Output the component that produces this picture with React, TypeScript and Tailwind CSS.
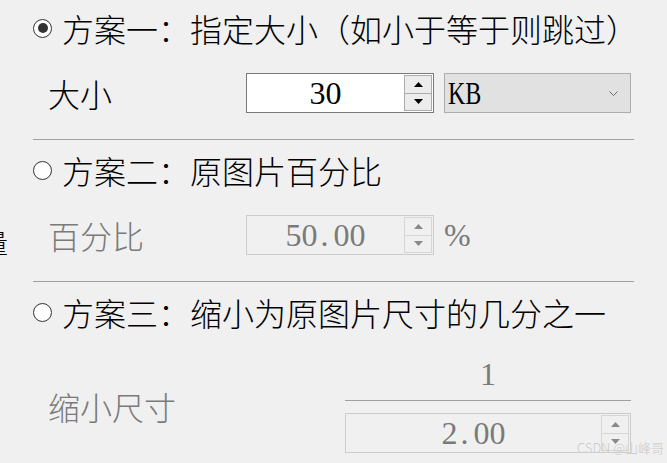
import React from 'react';

const cjk = "font-['Noto_Sans_CJK_SC',sans-serif] font-light";
const serif = "font-['Liberation_Serif','Noto_Sans_CJK_SC',serif] font-normal";

function Radio({ checked }: { checked?: boolean }) {
  return (
    <span className="flex h-[19px] w-[19px] shrink-0 items-center justify-center rounded-full border border-[#333333] bg-white">
      {checked && <span className="h-[10px] w-[10px] rounded-full bg-[#333333]" />}
    </span>
  );
}

function Arrow({ up, disabled }: { up?: boolean; disabled?: boolean }) {
  return (
    <svg width="9" height="5" viewBox="0 0 9 5" className={disabled ? 'fill-[#8a8a8a]' : 'fill-black'}>
      {up ? <polygon points="0,5 4.5,0 9,5" /> : <polygon points="0,0 9,0 4.5,5" />}
    </svg>
  );
}

function Spinner({ disabled }: { disabled?: boolean }) {
  const btn = disabled
    ? 'flex flex-1 items-center justify-center border border-[#d6d6d6] bg-[#f0f0f0]'
    : 'flex flex-1 items-center justify-center border border-[#acacac] bg-[#ececec]';
  return (
    <div className="my-[1px] mr-[1px] flex w-[28px] flex-col">
      <div className={btn}>
        <Arrow up disabled={disabled} />
      </div>
      <div className={`${btn} border-t-0`}>
        <Arrow disabled={disabled} />
      </div>
    </div>
  );
}

// SimSun-style decimal: the period takes a half-width cell
function Num({ value }: { value: string }) {
  const [a, b] = value.split('.');
  if (b === undefined) return <>{a}</>;
  return (
    <>
      {a}
      <span className="inline-block w-[16px] pl-[3px] text-left">.</span>
      {b}
    </>
  );
}

function NumberBox({ value, disabled, width }: { value: string; disabled?: boolean; width: string }) {
  return (
    <div
      className={`flex h-[40px] ${width} border ${
        disabled ? 'border-[#cccccc] bg-[#f0f0f0] text-[#7a7a7a]' : 'border-[#7a7a7a] bg-white text-black'
      }`}
    >
      <div className={`flex flex-1 items-center justify-center text-[32px] leading-none ${serif}`}>
        <Num value={value} />
      </div>
      <Spinner disabled={disabled} />
    </div>
  );
}

function Separator() {
  return <div className="mx-[33px] h-px bg-[#a0a0a0]" />;
}

export default function App() {
  return (
    <div className={`relative h-[463px] w-[667px] overflow-hidden bg-[#f0f0f0] ${cjk}`}>
      {/* 方案一 */}
      <div className="flex h-[56px] items-center gap-[10px] pl-[33px] text-[32px] leading-none text-black">
        <Radio checked />
        <span>方案一：指定大小（如小于等于则跳过）</span>
      </div>

      <div className="mt-[17px] flex items-center pl-[48px]">
        <span className="w-[198px] text-[32px] leading-none text-black">大小</span>
        <NumberBox value="30" width="w-[188px]" />
        <div className="ml-[10px] flex h-[40px] w-[187px] items-center justify-between border border-[#adadad] bg-[#e1e1e1] pl-[3px] pr-[12px]">
          <span className={`inline-block origin-left scale-x-75 text-[32px] leading-none text-black ${serif}`}>KB</span>
          <svg width="9" height="5" viewBox="0 0 9 5" fill="none" stroke="#6b6b6b" strokeWidth="1">
            <polyline points="0.5,0.5 4.5,4.5 8.5,0.5" />
          </svg>
        </div>
      </div>

      <div className="mt-[26px]">
        <Separator />
      </div>

      {/* 方案二 */}
      <div className="flex h-[60px] items-center gap-[10px] pl-[33px] text-[32px] leading-none text-black">
        <Radio />
        <span>方案二：原图片百分比</span>
      </div>

      <div className="mt-[15px] flex items-center">
        <div className="w-[10px] self-end overflow-hidden text-[26px] leading-none text-black">
          <span className="-ml-[18px] block">量</span>
        </div>
        <span className="ml-[38px] w-[198px] text-[32px] leading-none text-[#7a7a7a]">百分比</span>
        <NumberBox value="50.00" disabled width="w-[188px]" />
        <span className={`ml-[10px] text-[32px] leading-none text-[#7a7a7a] ${serif}`}>%</span>
      </div>

      <div className="mt-[26px]">
        <Separator />
      </div>

      {/* 方案三 */}
      <div className="flex h-[60px] items-center gap-[10px] pl-[33px] text-[32px] leading-none text-black">
        <Radio />
        <span>方案三：缩小为原图片尺寸的几分之一</span>
      </div>

      <div className="mt-[16px] flex items-center pl-[48px]">
        <span className="w-[297px] text-[32px] leading-none text-[#7a7a7a]">缩小尺寸</span>
        <div className="flex w-[286px] flex-col">
          <div className={`h-[32px] text-center text-[32px] leading-[32px] text-[#7a7a7a] ${serif}`}>1</div>
          <div className="mt-[10px] h-px bg-[#a0a0a0]" />
          <div className="mt-[12px]">
            <NumberBox value="2.00" disabled width="w-[286px]" />
          </div>
        </div>
      </div>

      <div className="absolute left-[577px] top-[441px] text-[13px] leading-none text-[#c4c4c4] [text-shadow:0_0_1px_#ffffff]">
        CSDN @山峰哥
      </div>
    </div>
  );
}
